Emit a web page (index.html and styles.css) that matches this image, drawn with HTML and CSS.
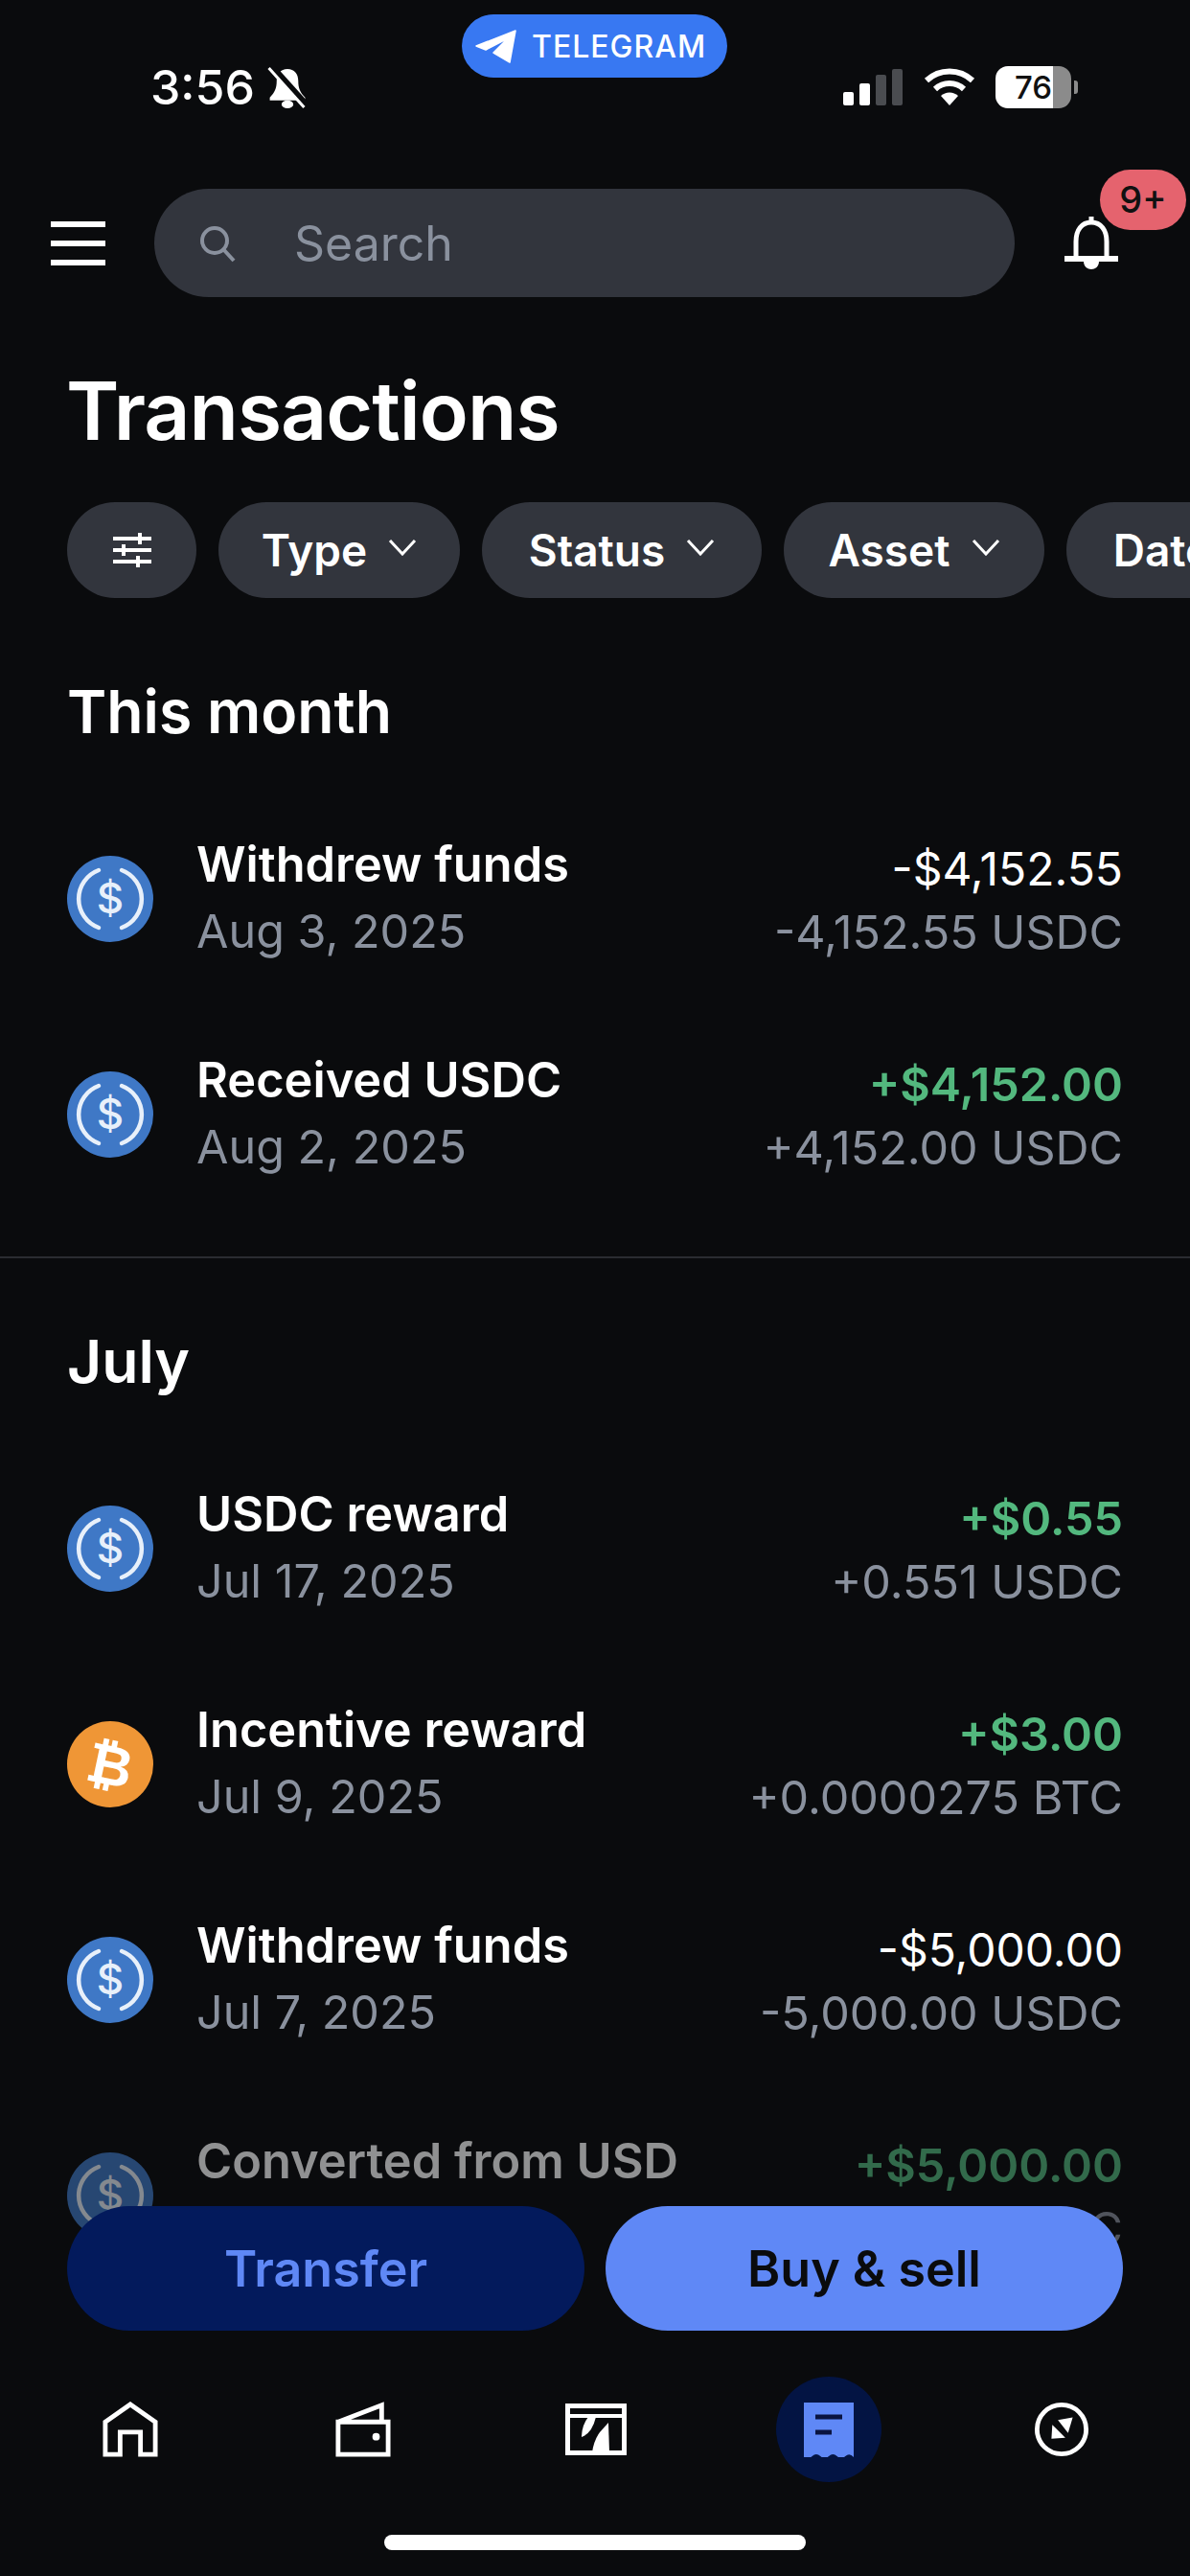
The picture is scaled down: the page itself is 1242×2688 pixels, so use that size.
FILE: index.html
```html
<!DOCTYPE html>
<html lang="en">

<head>
    <meta charset="UTF-8">
    <meta name="viewport" content="width=device-width, initial-scale=1.0">
    <title>Transactions</title>
    <link rel="stylesheet" href="styles.css">
</head>

<body>
    <svg class="defs" width="0" height="0">
        <symbol id="usdc" viewBox="0 0 90 90">
            <circle cx="45" cy="45" r="45" fill="#3f78c6"/>
            <path d="M33 15A32 32 0 0 0 33 75M57 15A32 32 0 0 1 57 75" fill="none" stroke="#e8f0fa" stroke-width="4.5" stroke-linecap="round"/>
        </symbol>
    </svg>

    <div class="screen">
        <div class="telegram">
            <svg class="telegram-icon" viewBox="0 0 44 44"><path d="M43 6 L37 39 L20 29 L35 14 L12 26 L2 22 Z" fill="#fff" stroke="#fff" stroke-width="1.5" stroke-linejoin="round"/></svg>
            <span>TELEGRAM</span>
        </div>

        <div class="statusbar">
            <div class="status-left">
                <span class="clock">3:56</span>
                <svg class="mute" viewBox="0 0 40 43"><path d="M21 3c-7 0-11 5-11 12 0 8-2 12-7 17v3h36v-3c-5-5-7-9-7-17 0-7-4-12-11-12z" fill="#fff"/><ellipse cx="21" cy="39" rx="6" ry="4" fill="#fff"/><path d="M5 0 L41 40" stroke="#0a0b0d" stroke-width="6"/><path d="M2 2 L38 42" stroke="#fff" stroke-width="3"/></svg>
            </div>
            <div class="status-right">
                <div class="signal">
                    <i class="bar bar1"></i>
                    <i class="bar bar2"></i>
                    <i class="bar bar3"></i>
                    <i class="bar bar4"></i>
                </div>
                <svg class="wifi" viewBox="0 0 54 40"><path d="M3 13 A35 35 0 0 1 51 13" fill="none" stroke="#fff" stroke-width="6"/><path d="M12 22 A22 22 0 0 1 42 22" fill="none" stroke="#fff" stroke-width="6"/><path d="M18 29 A13 13 0 0 1 36 29 L27 39 Z" fill="#fff"/></svg>
                <div class="battery"><span class="battery-num">76</span></div>
                <i class="battery-cap"></i>
            </div>
        </div>

        <header class="topbar">
            <div class="menu">
                <i></i>
                <i></i>
                <i></i>
            </div>
            <div class="search">
                <svg class="search-icon" viewBox="0 0 40 40"><circle cx="17" cy="17" r="13" fill="none" stroke="#8a919e" stroke-width="4"/><path d="M26 26 L37 38" stroke="#8a919e" stroke-width="4"/></svg>
                <span>Search</span>
            </div>
            <div class="bell">
                <svg class="bell-icon" viewBox="0 0 58 56"><path d="M29 0v7" stroke="#fff" stroke-width="5"/><path d="M13 44V26C13 14 19 6 29 6s16 8 16 20v18" fill="none" stroke="#fff" stroke-width="5"/><path d="M1 44h56" stroke="#fff" stroke-width="6"/><path d="M21 47h16c0 5-4 8-8 8s-8-3-8-8z" fill="#fff"/></svg>
                <span class="badge">9+</span>
            </div>
        </header>

        <h1 class="page-title">Transactions</h1>

        <div class="chips">
            <div class="chip chip-icon">
                <svg class="sliders" viewBox="0 0 40 36"><g stroke="#fff" stroke-width="4"><path d="M0 6h40M0 18h40M0 30h40"/><path d="M28 0v12M11 12v12M26 24v12"/></g></svg>
            </div>
            <div class="chip chip-type">Type <svg class="chev" viewBox="0 0 30 18"><path d="M2 2 L15 16 L28 2" fill="none" stroke="#fff" stroke-width="3"/></svg></div>
            <div class="chip chip-status">Status <svg class="chev" viewBox="0 0 30 18"><path d="M2 2 L15 16 L28 2" fill="none" stroke="#fff" stroke-width="3"/></svg></div>
            <div class="chip chip-asset">Asset <svg class="chev" viewBox="0 0 30 18"><path d="M2 2 L15 16 L28 2" fill="none" stroke="#fff" stroke-width="3"/></svg></div>
            <div class="chip chip-date">Date <svg class="chev" viewBox="0 0 30 18"><path d="M2 2 L15 16 L28 2" fill="none" stroke="#fff" stroke-width="3"/></svg></div>
        </div>

        <div class="list">
            <section class="group group-first">
                <h2 class="group-title">This month</h2>
                <div class="tx">
                    <svg class="coin" viewBox="0 0 90 90"><use href="#usdc"/><text x="45" y="60" class="usdc-sign">$</text></svg>
                    <div class="tx-left">
                        <div class="tx-name">Withdrew funds</div>
                        <div class="tx-sub">Aug 3, 2025</div>
                    </div>
                    <div class="tx-right">
                        <div class="tx-amount">-$4,152.55</div>
                        <div class="tx-sub">-4,152.55 USDC</div>
                    </div>
                </div>
                <div class="tx">
                    <svg class="coin" viewBox="0 0 90 90"><use href="#usdc"/><text x="45" y="60" class="usdc-sign">$</text></svg>
                    <div class="tx-left">
                        <div class="tx-name">Received USDC</div>
                        <div class="tx-sub">Aug 2, 2025</div>
                    </div>
                    <div class="tx-right">
                        <div class="tx-amount green">+$4,152.00</div>
                        <div class="tx-sub">+4,152.00 USDC</div>
                    </div>
                </div>
            </section>

            <section class="group">
                <h2 class="group-title">July</h2>
                <div class="tx">
                    <svg class="coin" viewBox="0 0 90 90"><use href="#usdc"/><text x="45" y="60" class="usdc-sign">$</text></svg>
                    <div class="tx-left">
                        <div class="tx-name">USDC reward</div>
                        <div class="tx-sub">Jul 17, 2025</div>
                    </div>
                    <div class="tx-right">
                        <div class="tx-amount green">+$0.55</div>
                        <div class="tx-sub">+0.551 USDC</div>
                    </div>
                </div>
                <div class="tx">
                    <svg class="coin" viewBox="0 0 90 90"><circle cx="45" cy="45" r="45" fill="#ef9636"/><text x="45" y="66" class="btc-sign" transform="rotate(12 45 45)">₿</text></svg>
                    <div class="tx-left">
                        <div class="tx-name">Incentive reward</div>
                        <div class="tx-sub">Jul 9, 2025</div>
                    </div>
                    <div class="tx-right">
                        <div class="tx-amount green">+$3.00</div>
                        <div class="tx-sub">+0.0000275 BTC</div>
                    </div>
                </div>
                <div class="tx">
                    <svg class="coin" viewBox="0 0 90 90"><use href="#usdc"/><text x="45" y="60" class="usdc-sign">$</text></svg>
                    <div class="tx-left">
                        <div class="tx-name">Withdrew funds</div>
                        <div class="tx-sub">Jul 7, 2025</div>
                    </div>
                    <div class="tx-right">
                        <div class="tx-amount">-$5,000.00</div>
                        <div class="tx-sub">-5,000.00 USDC</div>
                    </div>
                </div>
                <div class="tx tx-faded">
                    <svg class="coin" viewBox="0 0 90 90"><use href="#usdc"/><text x="45" y="60" class="usdc-sign">$</text></svg>
                    <div class="tx-left">
                        <div class="tx-name">Converted from USD</div>
                        <div class="tx-sub">Jul 7, 2025</div>
                    </div>
                    <div class="tx-right">
                        <div class="tx-amount green">+$5,000.00</div>
                        <div class="tx-sub">+5,000.00 USDC</div>
                    </div>
                </div>
            </section>
        </div>

        <div class="dock">
            <div class="actions">
                <div class="btn btn-transfer">Transfer</div>
                <div class="btn btn-buy">Buy &amp; sell</div>
            </div>
            <nav class="tabs">
                <div class="tab">
                    <svg class="tab-icon" viewBox="0 0 60 60"><path d="M3 57V22L30 3l27 19v35H41V33H19v24z" fill="none" stroke="#fff" stroke-width="5"/></svg>
                </div>
                <div class="tab">
                    <svg class="tab-icon" viewBox="0 0 60 60"><path d="M3 22h54v35H3zM3 22L50 4v18" fill="none" stroke="#fff" stroke-width="5"/><circle cx="44" cy="38" r="4" fill="#fff"/></svg>
                </div>
                <div class="tab">
                    <svg class="icon-chart" viewBox="0 0 64 54"><path d="M2.5 2.5h59v49h-59z" fill="none" stroke="#fff" stroke-width="5"/><path d="M4 13h56" stroke="#fff" stroke-width="4"/><path d="M32 14H24Q17 23 17 35 28 31 32 14z" fill="#fff"/><path d="M45 20L46 51H28Q30 38 36 30z" fill="#fff"/></svg>
                </div>
                <div class="tab">
                    <div class="tab-active">
                        <svg class="icon-receipt" viewBox="0 0 52 57"><path d="M0 0h52v57q-4.3-5-8.7-1t-8.7 0-8.6 0-8.7 0-8.7 0-8.600 1z" fill="#5f88f6"/><path d="M12 15h28M12 31h17" stroke="#0a1440" stroke-width="5"/></svg>
                    </div>
                </div>
                <div class="tab">
                    <svg class="tab-icon" viewBox="0 0 60 60"><circle cx="30" cy="30" r="26.5" fill="none" stroke="#fff" stroke-width="5"/><path d="M42 17L26 20 37 34z" fill="#fff"/><path d="M19 40l1-15 14 14z" fill="#fff"/></svg>
                </div>
            </nav>
            <div class="home-indicator"></div>
        </div>
    </div>
</body>

</html>
```

FILE: styles.css
```css
* {
    box-sizing: border-box;
}

body {
    margin: 0;
    background: #0a0b0d;
    font-family: Inter, "Noto Sans", sans-serif;
    color: #fff;
}

.screen {
    position: relative;
    width: 1242px;
    height: 2688px;
    overflow: hidden;
    display: flex;
    flex-direction: column;
    background: #0a0b0d;
}

.defs {
    position: absolute;
}

/* telegram pill */
.telegram {
    position: absolute;
    top: 15px;
    left: 482px;
    width: 277px;
    height: 66px;
    border-radius: 33px;
    background: #3878f2;
    display: flex;
    align-items: center;
    padding-left: 13px;
    gap: 16px;
    font-size: 32px;
    font-weight: 500;
    letter-spacing: 1px;
}

.telegram-icon {
    width: 44px;
    height: 44px;
}

/* status bar */
.statusbar {
    height: 182px;
    padding: 62px 117px 0 157px;
    display: flex;
    justify-content: space-between;
    align-items: flex-start;
    flex-shrink: 0;
}

.status-left {
    display: flex;
    align-items: center;
    gap: 12px;
}

.clock {
    font-size: 50px;
    font-weight: 500;
    line-height: 58px;
}

.mute {
    width: 42px;
    height: 44px;
}

.status-right {
    display: flex;
    align-items: center;
    height: 58px;
}

.signal {
    display: flex;
    align-items: flex-end;
    gap: 6px;
    height: 38px;
    margin-right: 22px;
}

.bar {
    width: 11px;
    border-radius: 2px;
    background: #fff;
}

.bar1 {
    height: 14px;
}

.bar2 {
    height: 23px;
}

.bar3 {
    height: 32px;
    background: #4a4c50;
}

.bar4 {
    height: 38px;
    background: #4a4c50;
}

.wifi {
    width: 54px;
    height: 40px;
    margin-right: 21px;
}

.battery {
    width: 79px;
    height: 44px;
    border-radius: 13px;
    background: linear-gradient(90deg, #fff 76%, #8b8b8b 76%);
    display: flex;
    align-items: center;
    justify-content: center;
}

.battery-num {
    color: #111;
    font-size: 33px;
    font-weight: 500;
}

.battery-cap {
    width: 4px;
    height: 14px;
    margin-left: 3px;
    border-radius: 0 3px 3px 0;
    background: #8b8b8b;
}

/* search row */
.topbar {
    height: 113px;
    padding-left: 53px;
    margin-top: 15px;
    display: flex;
    align-items: center;
    flex-shrink: 0;
}

.menu {
    width: 57px;
    display: flex;
    flex-direction: column;
    gap: 14px;
    margin-right: 51px;
}

.menu i {
    display: block;
    height: 6px;
    background: #fff;
}

.search {
    width: 898px;
    height: 113px;
    border-radius: 57px;
    background: #32353d;
    display: flex;
    align-items: center;
    padding-left: 46px;
    gap: 60px;
    color: #8a919e;
    font-size: 50px;
}

.search-icon {
    width: 40px;
    height: 40px;
}

.bell {
    position: relative;
    margin-left: 51px;
    width: 58px;
    height: 56px;
}

.bell-icon {
    width: 58px;
    height: 56px;
    display: block;
}

.badge {
    position: absolute;
    left: 38px;
    top: -49px;
    width: 90px;
    height: 63px;
    border-radius: 32px;
    background: #e5636e;
    color: #111;
    font-size: 38px;
    font-weight: 500;
    display: flex;
    align-items: center;
    justify-content: center;
}

/* title and filters */
.page-title {
    margin: 69px 0 0 69px;
    font-size: 84px;
    font-weight: 600;
    line-height: 100px;
    letter-spacing: -1px;
}

.chips {
    margin-top: 45px;
    padding-left: 70px;
    display: flex;
    gap: 23px;
    flex-shrink: 0;
}

.chip {
    height: 100px;
    border-radius: 50px;
    background: #32353d;
    display: flex;
    align-items: center;
    justify-content: center;
    gap: 22px;
    font-size: 46px;
    font-weight: 600;
    flex-shrink: 0;
}

.chip-icon {
    width: 135px;
}

.chip-type {
    width: 252px;
}

.chip-status {
    width: 292px;
}

.chip-asset {
    width: 272px;
}

.chip-date {
    width: 252px;
}

.sliders {
    width: 40px;
    height: 36px;
}

.chev {
    width: 30px;
    height: 18px;
    margin-top: -6px;
}

/* transaction list */
.list {
    flex: 1;
    min-height: 0;
    overflow: hidden;
}

.group {
    padding: 72px 70px 0;
}

.group-first {
    padding-top: 83px;
    padding-bottom: 36px;
    border-bottom: 2px solid #2a2c31;
}

.group-title {
    margin: 0 0 48px;
    font-size: 62.5px;
    font-weight: 600;
    line-height: 70px;
}

.tx {
    height: 225px;
    display: flex;
    align-items: center;
}

.coin {
    width: 90px;
    height: 90px;
    flex-shrink: 0;
    margin-right: 45px;
}

.tx-left {
    flex: 1;
}

.tx-right {
    padding-top: 5px;
    text-align: right;
}

.tx-name {
    font-size: 50.5px;
    font-weight: 600;
    line-height: 62px;
    margin-bottom: 6px;
}

.tx-amount {
    font-size: 48px;
    font-weight: 400;
    line-height: 66px;
}

.tx-sub {
    color: #8a919e;
    font-size: 48.5px;
    line-height: 66px;
}

.green {
    color: #53b87e;
    font-size: 48.5px;
    font-weight: 600;
}

.tx-faded {
    opacity: 0.55;
}

.usdc-sign {
    fill: #e8f0fa;
    font-family: Inter, sans-serif;
    font-size: 44px;
    font-weight: 500;
    text-anchor: middle;
}

.btc-sign {
    fill: #fff;
    font-family: "DejaVu Sans", sans-serif;
    font-size: 58px;
    font-weight: 700;
    text-anchor: middle;
}

/* bottom dock, the buttons' corners let the list show through */
.dock {
    position: absolute;
    left: 0;
    right: 0;
    bottom: 0;
    height: 386px;
    background: linear-gradient(transparent 65px, #0a0b0d 65px);
}

.actions {
    display: flex;
    gap: 22px;
    padding: 0 70px;
}

.btn {
    flex: 1;
    height: 130px;
    border-radius: 65px;
    display: flex;
    align-items: center;
    justify-content: center;
    font-size: 52px;
    font-weight: 600;
}

.btn-transfer {
    background: #031a5c;
    color: #5f88f6;
}

.btn-buy {
    background: #5f88f6;
    color: #0a0b0d;
}

.tabs {
    display: grid;
    grid-template-columns: repeat(5, 243px);
    padding: 48px 14px 0;
    height: 198px;
    align-items: start;
}

.tab {
    height: 110px;
    display: flex;
    align-items: center;
    justify-content: center;
}

.tab-active {
    width: 110px;
    height: 110px;
    border-radius: 50%;
    background: #031443;
    display: flex;
    align-items: center;
    justify-content: center;
}

.tab-icon {
    width: 58px;
    height: 58px;
}

.icon-chart {
    width: 64px;
    height: 54px;
}

.icon-receipt {
    width: 52px;
    height: 57px;
}

.home-indicator {
    width: 440px;
    height: 16px;
    margin: 15px auto 0;
    border-radius: 8px;
    background: #fff;
}
```
